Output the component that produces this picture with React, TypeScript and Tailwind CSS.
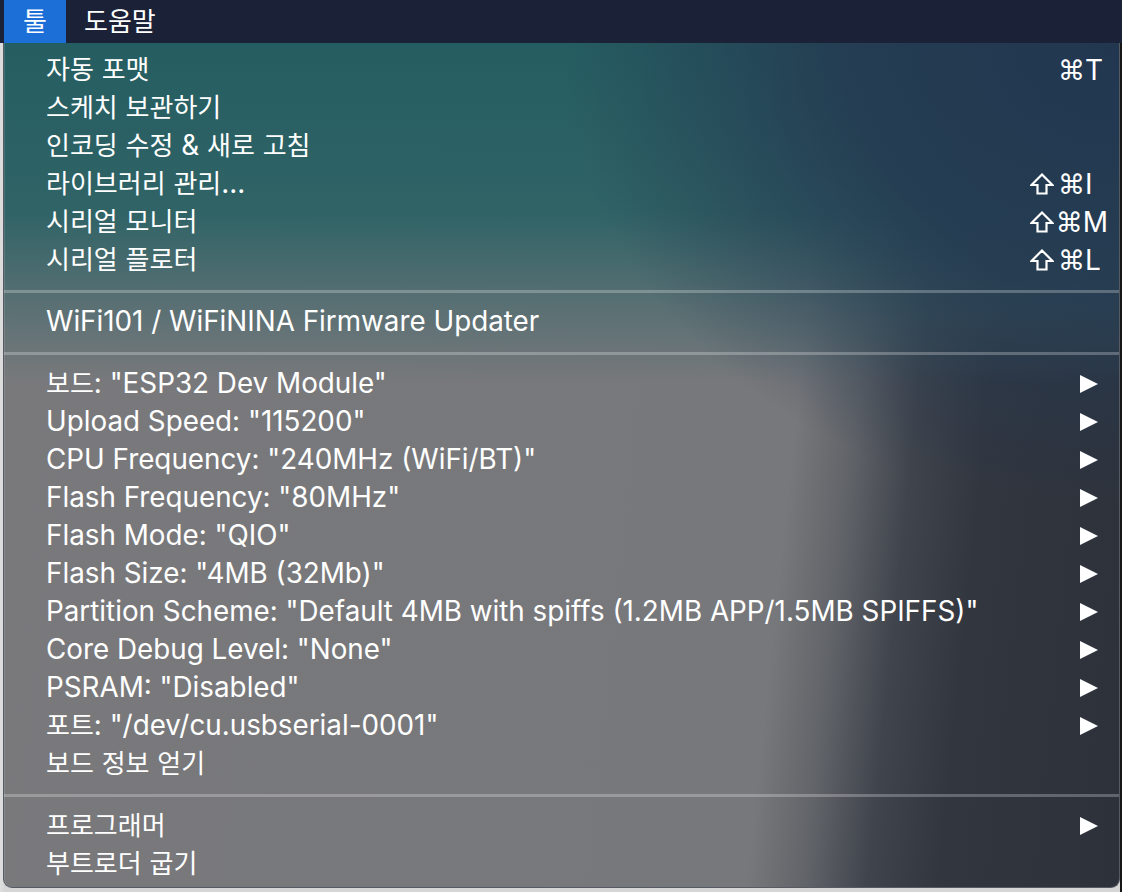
import React from "react";

type Item =
  | { kind: "item"; label: string; shortcut?: { shift?: boolean; key: string }; arrow?: boolean }
  | { kind: "sep" };

const items: Item[] = [
  { kind: "item", label: "자동 포맷", shortcut: { key: "T" } },
  { kind: "item", label: "스케치 보관하기" },
  { kind: "item", label: "인코딩 수정 & 새로 고침" },
  { kind: "item", label: "라이브러리 관리...", shortcut: { shift: true, key: "I" } },
  { kind: "item", label: "시리얼 모니터", shortcut: { shift: true, key: "M" } },
  { kind: "item", label: "시리얼 플로터", shortcut: { shift: true, key: "L" } },
  { kind: "sep" },
  { kind: "item", label: "WiFi101 / WiFiNINA Firmware Updater" },
  { kind: "sep" },
  { kind: "item", label: '보드: "ESP32 Dev Module"', arrow: true },
  { kind: "item", label: 'Upload Speed: "115200"', arrow: true },
  { kind: "item", label: 'CPU Frequency: "240MHz (WiFi/BT)"', arrow: true },
  { kind: "item", label: 'Flash Frequency: "80MHz"', arrow: true },
  { kind: "item", label: 'Flash Mode: "QIO"', arrow: true },
  { kind: "item", label: 'Flash Size: "4MB (32Mb)"', arrow: true },
  { kind: "item", label: 'Partition Scheme: "Default 4MB with spiffs (1.2MB APP/1.5MB SPIFFS)"', arrow: true },
  { kind: "item", label: 'Core Debug Level: "None"', arrow: true },
  { kind: "item", label: 'PSRAM: "Disabled"', arrow: true },
  { kind: "item", label: '포트: "/dev/cu.usbserial-0001"', arrow: true },
  { kind: "item", label: "보드 정보 얻기" },
  { kind: "sep" },
  { kind: "item", label: "프로그래머", arrow: true },
  { kind: "item", label: "부트로더 굽기" },
];

function Label({ text }: { text: string }) {
  const parts = text.split(/([\uAC00-\uD7A3]+)/);
  return (
    <>
      {parts.map((p, i) =>
        /[\uAC00-\uD7A3]/.test(p) ? (
          <span key={i} className="text-[26px]">
            {p}
          </span>
        ) : (
          <span key={i}>{p}</span>
        )
      )}
    </>
  );
}

function ShiftIcon() {
  return (
    <svg width="24" height="22" viewBox="0 0 24 22" className="block">
      <path
        d="M12 1.5 L22.5 12 L16.5 12 L16.5 20.5 L7.5 20.5 L7.5 12 L1.5 12 Z"
        fill="none"
        stroke="white"
        strokeWidth="2.2"
        strokeLinejoin="miter"
      />
    </svg>
  );
}

function Arrow() {
  return (
    <svg width="18" height="18" viewBox="0 0 18 18" className="block">
      <polygon points="0,0 18,9 0,18" fill="white" />
    </svg>
  );
}

export default function App() {
  return (
    <div className="w-[1122px] h-[892px] overflow-hidden bg-[#d6d6d6] flex flex-col font-['Inter','Noto_Sans_CJK_KR',sans-serif] text-white">
      <div className="h-[43px] shrink-0 bg-[#1b2136] flex items-stretch">
        <div className="w-[4px] shrink-0" />
        <div className="w-[62px] shrink-0 bg-[#1c6fd7] flex items-center justify-center text-[26px] leading-none">툴</div>
        <div className="pl-[18px] flex items-center text-[26px] leading-none">도움말</div>
      </div>
      <div className="flex flex-1 items-start">
        <div className="w-[3px] self-stretch bg-[#dcdcdc]" />
        <div className="w-[1117px] h-[845px] border-l border-b border-r border-[#555a63] rounded-b-[9px] bg-[radial-gradient(ellipse_50%_55%_at_100%_0%,rgba(34,54,80,1)_0%,rgba(36,56,80,0.85)_50%,rgba(40,58,80,0)_100%),linear-gradient(to_bottom,rgba(32,92,96,0.95)_0px,rgba(40,97,100,0.9)_170px,rgba(62,104,108,0.55)_260px,rgba(100,110,115,0)_340px),linear-gradient(96deg,#79797c_0%,#77787b_69%,#606368_74%,#40444c_79%,#32363f_85%,#2d313a_100%)] shadow-[inset_1px_0_0_rgba(255,255,255,0.12)] pt-[8px] flex flex-col">
          {items.map((it, i) =>
            it.kind === "sep" ? (
              <div key={i} className="h-[24px] flex items-center">
                <div className="h-[3px] w-full bg-white/25" />
              </div>
            ) : (
              <div key={i} className="h-[38px] flex items-center pl-[42px] pr-[11px]">
                <div className="flex-1 text-[27.8px] leading-none whitespace-nowrap">
                  <Label text={it.label} />
                </div>
                {it.shortcut && (
                  <div className="w-[78px] flex items-center text-[28px] leading-none">
                    <div className="w-[28px] flex items-center">{it.shortcut.shift && <ShiftIcon />}</div>
                    <div className="w-[27px] font-['DejaVu_Sans',sans-serif] text-[27px]">⌘</div>
                    <div>{it.shortcut.key}</div>
                  </div>
                )}
                {it.arrow && (
                  <div className="w-[28px] flex items-center">
                    <Arrow />
                  </div>
                )}
              </div>
            )
          )}
        </div>
        <div className="w-[2px] self-stretch bg-[#161616]" />
      </div>
    </div>
  );
}
